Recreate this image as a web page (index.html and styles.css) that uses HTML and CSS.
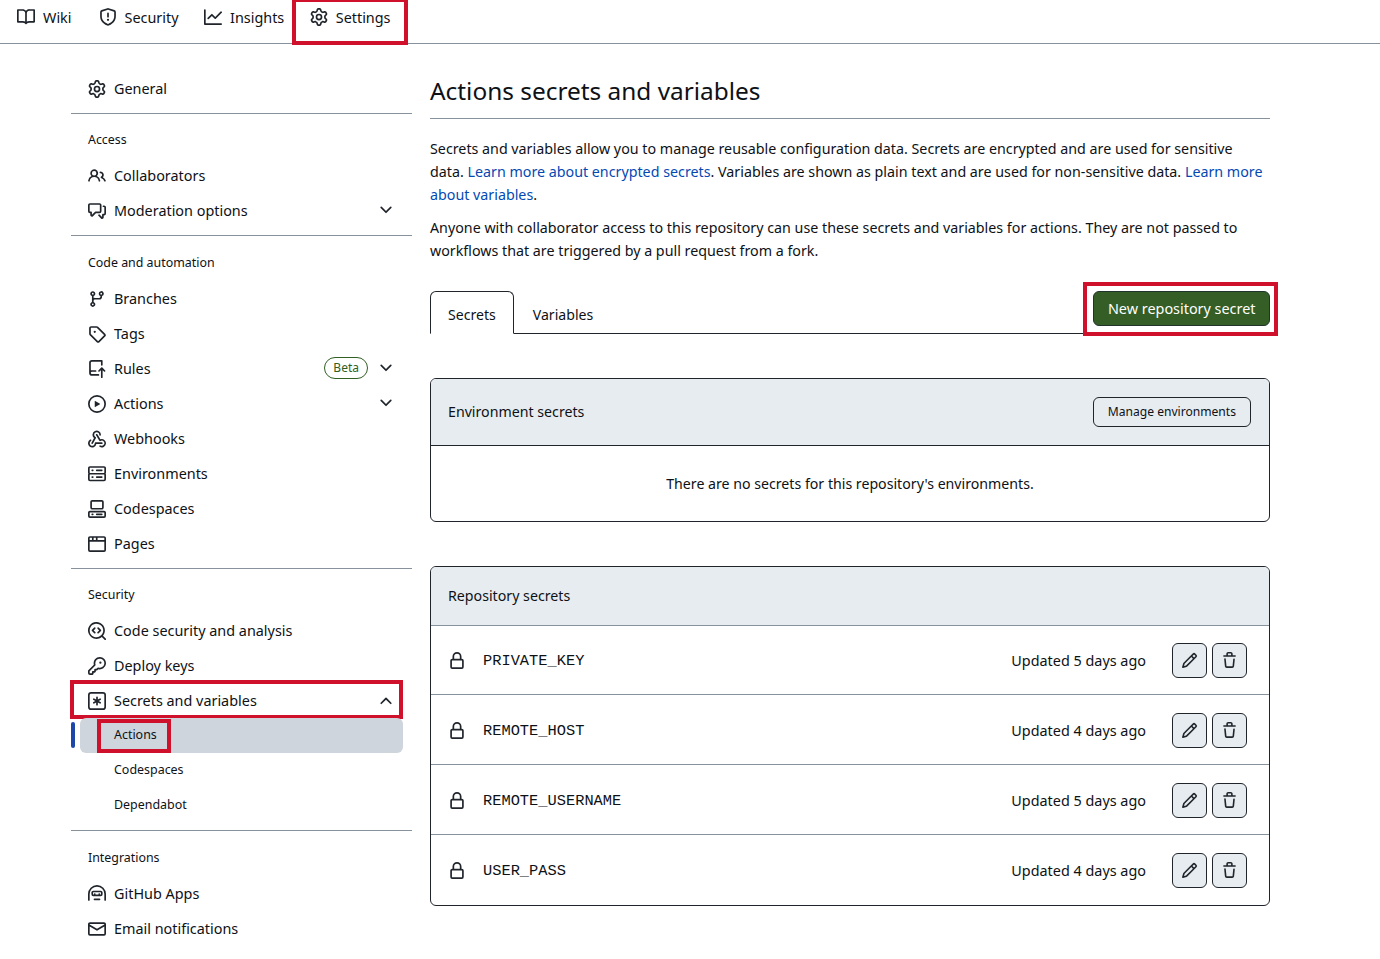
FILE: index.html
```html
<!DOCTYPE html>
<html lang="en">
<head>
<meta charset="utf-8">
<title>Actions secrets and variables</title>
<link rel="stylesheet" href="styles.css">
</head>
<body>
<svg class="sprite" xmlns="http://www.w3.org/2000/svg" aria-hidden="true">
<symbol id="i-book" viewBox="0 0 16 16"><path d="M0 1.75A.75.75 0 0 1 .75 1h4.253c1.227 0 2.317.59 3 1.501A3.743 3.743 0 0 1 11.006 1h4.245a.75.75 0 0 1 .75.75v10.5a.75.75 0 0 1-.75.75h-4.507a2.25 2.25 0 0 0-1.591.659l-.622.621a.75.75 0 0 1-1.06 0l-.622-.621A2.25 2.25 0 0 0 5.258 13H.75a.75.75 0 0 1-.75-.75Zm7.251 10.324.004-5.073-.002-2.253A2.25 2.25 0 0 0 5.003 2.5H1.5v9h3.757a3.75 3.75 0 0 1 1.994.574ZM8.755 4.75l-.004 7.322a3.752 3.752 0 0 1 1.992-.572H14.5v-9h-3.495a2.25 2.25 0 0 0-2.25 2.25Z"/></symbol>
<symbol id="i-shield" viewBox="0 0 16 16"><path d="M7.467.133a1.748 1.748 0 0 1 1.066 0l5.25 1.68A1.75 1.75 0 0 1 15 3.48V7c0 1.566-.32 3.182-1.303 4.682-.983 1.498-2.585 2.813-5.032 3.855a1.697 1.697 0 0 1-1.33 0c-2.447-1.042-4.049-2.357-5.032-3.855C1.32 10.182 1 8.566 1 7V3.48a1.75 1.75 0 0 1 1.217-1.667Zm.61 1.429a.25.25 0 0 0-.153 0l-5.25 1.68a.25.25 0 0 0-.174.238V7c0 1.358.275 2.666 1.057 3.86.784 1.194 2.121 2.34 4.366 3.297a.196.196 0 0 0 .154 0c2.245-.956 3.582-2.104 4.366-3.298C13.225 9.666 13.5 8.36 13.5 7V3.48a.251.251 0 0 0-.174-.237l-5.25-1.68ZM8.75 4.75v3a.75.75 0 0 1-1.5 0v-3a.75.75 0 0 1 1.5 0ZM9 10.5a1 1 0 1 1-2 0 1 1 0 0 1 2 0Z"/></symbol>
<symbol id="i-graph" viewBox="0 0 16 16"><path d="M1.5 1.75V13.5h13.75a.75.75 0 0 1 0 1.5H.75a.75.75 0 0 1-.75-.75V1.75a.75.75 0 0 1 1.5 0Zm14.28 2.53-5.25 5.25a.75.75 0 0 1-1.06 0L7 7.06 4.28 9.78a.751.751 0 0 1-1.042-.018.751.751 0 0 1-.018-1.042l3.25-3.25a.75.75 0 0 1 1.06 0L10 7.94l4.72-4.72a.751.751 0 0 1 1.042.018.751.751 0 0 1 .018 1.042Z"/></symbol>
<symbol id="i-gear" viewBox="0 0 16 16"><path d="M8 0a8.2 8.2 0 0 1 .701.031C9.444.095 9.99.645 10.16 1.29l.288 1.107c.018.066.079.158.212.224.231.114.454.243.668.386.123.082.233.09.299.071l1.103-.303c.644-.176 1.392.021 1.82.63.27.385.506.792.704 1.218.315.675.111 1.422-.364 1.891l-.814.806c-.049.048-.098.147-.088.294.016.257.016.515 0 .772-.01.147.038.246.088.294l.814.806c.475.469.679 1.216.364 1.891a7.977 7.977 0 0 1-.704 1.217c-.428.61-1.176.807-1.82.63l-1.102-.302c-.067-.019-.177-.011-.3.071a5.909 5.909 0 0 1-.668.386c-.133.066-.194.158-.211.224l-.29 1.106c-.168.646-.715 1.196-1.458 1.26a8.006 8.006 0 0 1-1.402 0c-.743-.064-1.289-.614-1.458-1.26l-.289-1.106c-.018-.066-.079-.158-.212-.224a5.738 5.738 0 0 1-.668-.386c-.123-.082-.233-.09-.299-.071l-1.103.303c-.644.176-1.392-.021-1.82-.63a8.12 8.12 0 0 1-.704-1.218c-.315-.675-.111-1.422.363-1.891l.815-.806c.05-.048.098-.147.088-.294a6.214 6.214 0 0 1 0-.772c.01-.147-.038-.246-.088-.294l-.815-.806C.635 6.045.431 5.298.746 4.623a7.92 7.92 0 0 1 .704-1.217c.428-.61 1.176-.807 1.82-.63l1.102.302c.067.019.177.011.3-.071.214-.143.437-.272.668-.386.133-.066.194-.158.211-.224l.29-1.106C6.009.645 6.556.095 7.299.03 7.53.01 7.764 0 8 0Zm-.571 1.525c-.036.003-.108.036-.137.146l-.289 1.105c-.147.561-.549.967-.998 1.189-.173.086-.34.183-.5.29-.417.278-.97.423-1.529.27l-1.103-.303c-.109-.03-.175.016-.195.045-.22.312-.412.644-.573.99-.014.031-.021.11.059.19l.815.806c.411.406.562.957.53 1.456a4.709 4.709 0 0 0 0 .582c.032.499-.119 1.05-.53 1.456l-.815.806c-.081.08-.073.159-.059.19.162.346.353.677.573.989.02.03.085.076.195.046l1.102-.303c.56-.153 1.113-.008 1.53.27.161.107.328.204.501.29.447.222.85.629.997 1.189l.289 1.105c.029.109.101.143.137.146a6.6 6.6 0 0 0 1.142 0c.036-.003.108-.036.137-.146l.289-1.105c.147-.561.549-.967.998-1.189.173-.086.34-.183.5-.29.417-.278.97-.423 1.529-.27l1.103.303c.109.029.175-.016.195-.045.22-.313.411-.644.573-.99.014-.031.021-.11-.059-.19l-.815-.806c-.411-.406-.562-.957-.53-1.456a4.709 4.709 0 0 0 0-.582c-.032-.499.119-1.05.53-1.456l.815-.806c.081-.08.073-.159.059-.19a6.464 6.464 0 0 0-.573-.989c-.02-.03-.085-.076-.195-.046l-1.102.303c-.56.153-1.113.008-1.53-.27a4.44 4.44 0 0 0-.501-.29c-.447-.222-.85-.629-.997-1.189l-.289-1.105c-.029-.11-.101-.143-.137-.146a6.6 6.6 0 0 0-1.142 0ZM11 8a3 3 0 1 1-6 0 3 3 0 0 1 6 0ZM9.5 8a1.5 1.5 0 1 0-3.001.001A1.5 1.5 0 0 0 9.5 8Z"/></symbol>
<symbol id="i-people" viewBox="0 0 16 16"><path d="M2 5.5a3.5 3.5 0 1 1 5.898 2.549 5.508 5.508 0 0 1 3.034 4.084.75.75 0 1 1-1.482.235 4 4 0 0 0-7.9 0 .75.75 0 0 1-1.482-.236A5.507 5.507 0 0 1 3.102 8.05 3.493 3.493 0 0 1 2 5.5ZM11 4a3.001 3.001 0 0 1 2.22 5.018 5.01 5.01 0 0 1 2.56 3.012.749.749 0 0 1-.885.954.752.752 0 0 1-.549-.514 3.507 3.507 0 0 0-2.522-2.372.75.75 0 0 1-.574-.73v-.352a.75.75 0 0 1 .416-.672A1.5 1.5 0 0 0 11 5.5.75.75 0 0 1 11 4Zm-5.5-.5a2 2 0 1 0-.001 3.999A2 2 0 0 0 5.5 3.5Z"/></symbol>
<symbol id="i-discussion" viewBox="0 0 16 16"><path d="M1.75 1h8.5c.966 0 1.75.784 1.75 1.75v5.5A1.75 1.75 0 0 1 10.25 10H7.061l-2.574 2.573A1.458 1.458 0 0 1 2 11.543V10h-.25A1.75 1.75 0 0 1 0 8.25v-5.5C0 1.784.784 1 1.75 1ZM1.5 2.75v5.5c0 .138.112.25.25.25h1a.75.75 0 0 1 .75.75v2.19l2.72-2.72a.749.749 0 0 1 .53-.22h3.5a.25.25 0 0 0 .25-.25v-5.5a.25.25 0 0 0-.25-.25h-8.5a.25.25 0 0 0-.25.25Zm13 2a.25.25 0 0 0-.25-.25h-.5a.75.75 0 0 1 0-1.5h.5c.966 0 1.75.784 1.75 1.75v5.5A1.75 1.75 0 0 1 14.25 12H14v1.543a1.458 1.458 0 0 1-2.487 1.03L9.22 12.28a.749.749 0 0 1 .326-1.275.749.749 0 0 1 .734.215l2.22 2.22v-2.19a.75.75 0 0 1 .75-.75h1a.25.25 0 0 0 .25-.25Z"/></symbol>
<symbol id="i-branch" viewBox="0 0 16 16"><path d="M9.5 3.25a2.25 2.25 0 1 1 3 2.122V6A2.5 2.5 0 0 1 10 8.5H6a1 1 0 0 0-1 1v1.128a2.251 2.251 0 1 1-1.5 0V5.372a2.25 2.25 0 1 1 1.5 0v1.836A2.493 2.493 0 0 1 6 7h4a1 1 0 0 0 1-1v-.628A2.25 2.25 0 0 1 9.5 3.25Zm-6 0a.75.75 0 1 0 1.5 0 .75.75 0 0 0-1.5 0Zm8.25-.75a.75.75 0 1 0 0 1.5.75.75 0 0 0 0-1.5ZM4.25 12a.75.75 0 1 0 0 1.5.75.75 0 0 0 0-1.5Z"/></symbol>
<symbol id="i-tag" viewBox="0 0 16 16"><path d="M1 7.775V2.75C1 1.784 1.784 1 2.75 1h5.025c.464 0 .91.184 1.238.513l6.25 6.25a1.75 1.75 0 0 1 0 2.474l-5.026 5.026a1.75 1.75 0 0 1-2.474 0l-6.25-6.25A1.752 1.752 0 0 1 1 7.775Zm1.5 0c0 .066.026.13.073.177l6.25 6.25a.25.25 0 0 0 .354 0l5.025-5.025a.25.25 0 0 0 0-.354l-6.25-6.25a.25.25 0 0 0-.177-.073H2.75a.25.25 0 0 0-.25.25ZM6 5a1 1 0 1 1 0 2 1 1 0 0 1 0-2Z"/></symbol>
<symbol id="i-rules" viewBox="0 0 16 16"><path d="M1 2.5A2.5 2.5 0 0 1 3.5 0h8.75a.75.75 0 0 1 .75.75v3.5a.75.75 0 0 1-1.5 0V1.5h-8a1 1 0 0 0-1 1v6.708A2.493 2.493 0 0 1 3.5 9h3.25a.75.75 0 0 1 0 1.5H3.5a1 1 0 0 0 0 2h5.75a.75.75 0 0 1 0 1.5H3.5A2.5 2.5 0 0 1 1 11.5Zm13.23 7.79h-.001l-1.224-1.224v6.184a.75.75 0 0 1-1.5 0V9.066L10.28 10.29a.75.75 0 0 1-1.06-1.061l2.505-2.504a.75.75 0 0 1 1.06 0L15.29 9.23a.751.751 0 0 1-.018 1.042.751.751 0 0 1-1.042.018Z"/></symbol>
<symbol id="i-play" viewBox="0 0 16 16"><path d="M8 0a8 8 0 1 1 0 16A8 8 0 0 1 8 0ZM1.5 8a6.5 6.5 0 1 0 13 0 6.5 6.5 0 0 0-13 0Zm4.879-2.773 4.264 2.559a.25.25 0 0 1 0 .428l-4.264 2.559A.25.25 0 0 1 6 10.559V5.442a.25.25 0 0 1 .379-.215Z"/></symbol>
<symbol id="i-webhook" viewBox="0 0 16 16"><path d="M5.5 4.25a2.25 2.25 0 0 1 4.5 0 .75.75 0 0 0 1.5 0 3.75 3.75 0 1 0-6.14 2.889l-2.272 4.258a.75.75 0 0 0 1.324.706L7 7.25a.75.75 0 0 0-.309-1.015A2.25 2.25 0 0 1 5.5 4.25Z"/><path d="M7.364 3.607a.75.75 0 0 1 1.03.257l2.608 4.349a3.75 3.75 0 1 1-.628 6.785.75.75 0 0 1 .752-1.299 2.25 2.25 0 1 0-.033-3.88.75.75 0 0 1-1.03-.256L7.107 4.636a.75.75 0 0 1 .257-1.03Z"/><path d="M2.9 8.776A.75.75 0 0 1 2.625 9.8 2.25 2.25 0 1 0 6 11.75a.75.75 0 0 1 .75-.751h5.5a.75.75 0 0 1 0 1.5H7.425a3.751 3.751 0 1 1-5.55-3.998.75.75 0 0 1 1.024.274Z"/></symbol>
<symbol id="i-server" viewBox="0 0 16 16"><path d="M1.75 1h12.5c.966 0 1.75.784 1.75 1.75v4c0 .372-.116.717-.314 1 .198.283.314.628.314 1v4a1.75 1.75 0 0 1-1.75 1.75H1.75A1.75 1.75 0 0 1 0 12.75v-4c0-.358.109-.707.314-1a1.739 1.739 0 0 1-.314-1v-4C0 1.784.784 1 1.75 1ZM1.5 2.75v4c0 .138.112.25.25.25h12.5a.25.25 0 0 0 .25-.25v-4a.25.25 0 0 0-.25-.25H1.75a.25.25 0 0 0-.25.25Zm.25 5.75a.25.25 0 0 0-.25.25v4c0 .138.112.25.25.25h12.5a.25.25 0 0 0 .25-.25v-4a.25.25 0 0 0-.25-.25ZM7 4.75A.75.75 0 0 1 7.75 4h4.5a.75.75 0 0 1 0 1.5h-4.5A.75.75 0 0 1 7 4.75ZM7.75 10h4.5a.75.75 0 0 1 0 1.5h-4.5a.75.75 0 0 1 0-1.5ZM3 4.75A.75.75 0 0 1 3.75 4h.5a.75.75 0 0 1 0 1.5h-.5A.75.75 0 0 1 3 4.75ZM3.75 10h.5a.75.75 0 0 1 0 1.5h-.5a.75.75 0 0 1 0-1.5Z"/></symbol>
<symbol id="i-codespaces" viewBox="0 0 16 16"><path d="M0 11.25c0-.966.784-1.75 1.75-1.75h12.5c.966 0 1.75.784 1.75 1.75v3A1.75 1.75 0 0 1 14.25 16H1.75A1.75 1.75 0 0 1 0 14.25Zm2-9.5C2 .784 2.784 0 3.75 0h8.5C13.216 0 14 .784 14 1.75v5a1.75 1.75 0 0 1-1.75 1.75h-8.5A1.75 1.75 0 0 1 2 6.75Zm1.75-.25a.25.25 0 0 0-.25.25v5c0 .138.112.25.25.25h8.5a.25.25 0 0 0 .25-.25v-5a.25.25 0 0 0-.25-.25Zm-2 9.5a.25.25 0 0 0-.25.25v3c0 .138.112.25.25.25h12.5a.25.25 0 0 0 .25-.25v-3a.25.25 0 0 0-.25-.25Z"/><path d="M7 12.75a.75.75 0 0 1 .75-.75h4.5a.75.75 0 0 1 0 1.5h-4.5a.75.75 0 0 1-.75-.75Zm-4 0a.75.75 0 0 1 .75-.75h.5a.75.75 0 0 1 0 1.5h-.5a.75.75 0 0 1-.75-.75Z"/></symbol>
<symbol id="i-browser" viewBox="0 0 16 16"><path d="M0 2.75C0 1.784.784 1 1.75 1h12.5c.966 0 1.75.784 1.75 1.75v10.5A1.75 1.75 0 0 1 14.25 15H1.75A1.75 1.75 0 0 1 0 13.25ZM14.5 6h-13v7.25c0 .138.112.25.25.25h12.5a.25.25 0 0 0 .25-.25Zm-6-3.5v2h6v-1.75a.25.25 0 0 0-.25-.25ZM5 2.5v2h2v-2Zm-3.25 0a.25.25 0 0 0-.25.25V4.5h2v-2Z"/></symbol>
<symbol id="i-codescan" viewBox="0 0 16 16"><path d="M8.47 4.97a.75.75 0 0 0 0 1.06L9.94 7.5 8.47 8.97a.75.75 0 1 0 1.06 1.06l2-2a.75.75 0 0 0 0-1.06l-2-2a.75.75 0 0 0-1.06 0ZM6.53 6.03a.75.75 0 0 0-1.06-1.06l-2 2a.75.75 0 0 0 0 1.06l2 2a.75.75 0 1 0 1.06-1.06L5.06 7.5l1.47-1.47Z"/><path d="M12.246 13.307a7.501 7.501 0 1 1 1.06-1.06l2.474 2.473a.749.749 0 0 1-.326 1.275.749.749 0 0 1-.734-.215ZM1.5 7.5a6.002 6.002 0 0 0 3.608 5.504 6.002 6.002 0 0 0 6.486-1.117.748.748 0 0 1 .292-.293A6 6 0 1 0 1.5 7.5Z"/></symbol>
<symbol id="i-key" viewBox="0 0 16 16"><path d="M10.5 0a5.499 5.499 0 1 1-1.288 10.848l-.932.932a.749.749 0 0 1-.53.22H7v.75a.749.749 0 0 1-.22.53l-.5.5a.749.749 0 0 1-.53.22H5v.75a.749.749 0 0 1-.22.53l-.5.5a.749.749 0 0 1-.53.22h-2A1.75 1.75 0 0 1 0 14.25v-2c0-.199.079-.389.22-.53l4.932-4.932A5.5 5.5 0 0 1 10.5 0Zm-4 5.5c-.001.431.069.86.205 1.269a.75.75 0 0 1-.181.768L1.5 12.56v1.69c0 .138.112.25.25.25h1.69l.06-.06v-1.19a.75.75 0 0 1 .75-.75h1.19l.06-.06v-1.19a.75.75 0 0 1 .75-.75h1.19l1.023-1.025a.75.75 0 0 1 .768-.18A4 4 0 1 0 6.5 5.5ZM11 6a1 1 0 1 1 0-2 1 1 0 0 1 0 2Z"/></symbol>
<symbol id="i-asterisk" viewBox="0 0 16 16"><path d="M0 2.75A2.75 2.75 0 0 1 2.75 0h10.5A2.75 2.75 0 0 1 16 2.75v10.5A2.75 2.75 0 0 1 13.25 16H2.75A2.75 2.75 0 0 1 0 13.25ZM2.75 1.5c-.69 0-1.25.56-1.25 1.25v10.5c0 .69.56 1.25 1.25 1.25h10.5c.69 0 1.25-.56 1.25-1.25V2.75c0-.69-.56-1.25-1.25-1.25Z"/><path d="M8 4a.75.75 0 0 1 .75.75V6.7l1.69-.975a.75.75 0 0 1 .75 1.3L9.5 8l1.69.976a.75.75 0 0 1-.75 1.298L8.75 9.3v1.951a.75.75 0 0 1-1.5 0V9.299l-1.69.976a.75.75 0 0 1-.75-1.3L6.5 8l-1.69-.975a.75.75 0 0 1 .75-1.3l1.69.976V4.75A.75.75 0 0 1 8 4Z"/></symbol>
<symbol id="i-hubot" viewBox="0 0 16 16"><path d="M0 8a8 8 0 0 1 16 0v5.25a.75.75 0 0 1-1.5 0V8a6.5 6.5 0 1 0-13 0v5.25a.75.75 0 0 1-1.5 0Zm3-1.25C3 5.784 3.784 5 4.75 5h6.5c.966 0 1.75.784 1.75 1.75v1.5A1.75 1.75 0 0 1 11.25 10h-6.5A1.75 1.75 0 0 1 3 8.25Zm1.75-.25a.25.25 0 0 0-.25.25v1.5c0 .138.112.25.25.25h6.5a.25.25 0 0 0 .25-.25v-1.5a.25.25 0 0 0-.25-.25ZM6 7.25a.75.75 0 0 1 0 1.5.75.75 0 0 1 0-1.5Zm4 0a.75.75 0 0 1 0 1.5.75.75 0 0 1 0-1.5Zm-5 5.5a.75.75 0 0 1 .75-.75h4.5a.75.75 0 0 1 0 1.5h-4.5a.75.75 0 0 1-.75-.75Z"/></symbol>
<symbol id="i-mail" viewBox="0 0 16 16"><path d="M1.75 2h12.5c.966 0 1.75.784 1.75 1.75v8.5A1.75 1.75 0 0 1 14.25 14H1.75A1.75 1.75 0 0 1 0 12.25v-8.5C0 2.784.784 2 1.75 2ZM1.5 12.251c0 .138.112.25.25.25h12.5a.25.25 0 0 0 .25-.25V5.809L8.38 9.397a.75.75 0 0 1-.76 0L1.5 5.809v6.442Zm13-8.181v-.32a.25.25 0 0 0-.25-.25H1.75a.25.25 0 0 0-.25.25v.32L8 7.88Z"/></symbol>
<symbol id="i-down" viewBox="0 0 16 16"><path d="M12.78 5.22a.749.749 0 0 1 0 1.06l-4.25 4.25a.749.749 0 0 1-1.06 0L3.22 6.28a.749.749 0 1 1 1.06-1.06L8 8.939l3.72-3.719a.749.749 0 0 1 1.06 0Z"/></symbol>
<symbol id="i-up" viewBox="0 0 16 16"><path d="M3.22 10.53a.749.749 0 0 1 0-1.06l4.25-4.25a.749.749 0 0 1 1.06 0l4.25 4.25a.749.749 0 1 1-1.06 1.06L8 6.811 4.28 10.53a.749.749 0 0 1-1.06 0Z"/></symbol>
<symbol id="i-lock" viewBox="0 0 16 16"><path d="M4 4a4 4 0 0 1 8 0v2h.25c.966 0 1.75.784 1.75 1.75v5.5A1.75 1.75 0 0 1 12.25 15h-8.5A1.75 1.75 0 0 1 2 13.25v-5.5C2 6.784 2.784 6 3.75 6H4Zm8.25 3.5h-8.5a.25.25 0 0 0-.25.25v5.5c0 .138.112.25.25.25h8.5a.25.25 0 0 0 .25-.25v-5.5a.25.25 0 0 0-.25-.25ZM10.5 6V4a2.5 2.5 0 1 0-5 0v2Z"/></symbol>
<symbol id="i-pencil" viewBox="0 0 16 16"><path d="M11.013 1.427a1.75 1.75 0 0 1 2.474 0l1.086 1.086a1.75 1.75 0 0 1 0 2.474l-8.61 8.61c-.21.21-.47.364-.756.445l-3.251.93a.75.75 0 0 1-.927-.928l.929-3.25c.081-.286.235-.547.445-.758l8.61-8.61Zm.176 4.823L9.75 4.81l-6.286 6.287a.253.253 0 0 0-.064.108l-.558 1.953 1.953-.558a.253.253 0 0 0 .108-.064Zm1.238-3.763a.25.25 0 0 0-.354 0L10.811 3.75l1.439 1.44 1.263-1.263a.25.25 0 0 0 0-.354Z"/></symbol>
<symbol id="i-trash" viewBox="0 0 16 16"><path d="M11 1.75V3h2.25a.75.75 0 0 1 0 1.5H2.75a.75.75 0 0 1 0-1.5H5V1.75C5 .784 5.784 0 6.75 0h2.5C10.216 0 11 .784 11 1.75ZM4.496 6.675l.66 6.6a.25.25 0 0 0 .249.225h5.19a.25.25 0 0 0 .249-.225l.66-6.6a.75.75 0 0 1 1.492.149l-.66 6.6A1.748 1.748 0 0 1 10.595 15h-5.19a1.75 1.75 0 0 1-1.741-1.575l-.66-6.6a.75.75 0 1 1 1.492-.15ZM6.5 1.75V3h3V1.75a.25.25 0 0 0-.25-.25h-2.5a.25.25 0 0 0-.25.25Z"/></symbol>
</svg>

<header class="repo-nav">
  <a class="repo-tab repo-tab-wiki"><svg class="icon"><use href="#i-book"/></svg>Wiki</a>
  <a class="repo-tab"><svg class="icon"><use href="#i-shield"/></svg>Security</a>
  <a class="repo-tab"><svg class="icon"><use href="#i-graph"/></svg>Insights</a>
  <a class="repo-tab repo-tab-settings"><svg class="icon"><use href="#i-gear"/></svg>Settings<span class="callout callout-settings"></span></a>
</header>

<div class="layout">
  <nav class="sidebar">
    <div class="nav-group">
      <a class="nav-item"><svg class="icon"><use href="#i-gear"/></svg>General</a>
    </div>
    <div class="nav-group">
      <h2 class="nav-heading heading-access">Access</h2>
      <a class="nav-item"><svg class="icon"><use href="#i-people"/></svg>Collaborators</a>
      <a class="nav-item"><svg class="icon"><use href="#i-discussion"/></svg>Moderation options<svg class="icon chevron"><use href="#i-down"/></svg></a>
    </div>
    <div class="nav-group">
      <h2 class="nav-heading">Code and automation</h2>
      <a class="nav-item"><svg class="icon"><use href="#i-branch"/></svg>Branches</a>
      <a class="nav-item"><svg class="icon"><use href="#i-tag"/></svg>Tags</a>
      <a class="nav-item"><svg class="icon"><use href="#i-rules"/></svg>Rules<span class="beta">Beta</span><svg class="icon chevron chevron-after-beta"><use href="#i-down"/></svg></a>
      <a class="nav-item"><svg class="icon"><use href="#i-play"/></svg>Actions<svg class="icon chevron"><use href="#i-down"/></svg></a>
      <a class="nav-item"><svg class="icon"><use href="#i-webhook"/></svg>Webhooks</a>
      <a class="nav-item"><svg class="icon"><use href="#i-server"/></svg>Environments</a>
      <a class="nav-item"><svg class="icon"><use href="#i-codespaces"/></svg>Codespaces</a>
      <a class="nav-item"><svg class="icon"><use href="#i-browser"/></svg>Pages</a>
    </div>
    <div class="nav-group">
      <h2 class="nav-heading heading-security">Security</h2>
      <a class="nav-item"><svg class="icon"><use href="#i-codescan"/></svg>Code security and analysis</a>
      <a class="nav-item"><svg class="icon"><use href="#i-key"/></svg>Deploy keys</a>
      <a class="nav-item nav-item-open"><svg class="icon"><use href="#i-asterisk"/></svg>Secrets and variables<svg class="icon chevron chevron-up"><use href="#i-up"/></svg><span class="callout callout-secrets"></span></a>
      <a class="nav-sub nav-sub-active"><span class="nav-sub-label">Actions<span class="callout callout-actions"></span></span></a>
      <a class="nav-sub"><span class="nav-sub-label">Codespaces</span></a>
      <a class="nav-sub"><span class="nav-sub-label">Dependabot</span></a>
    </div>
    <div class="nav-group nav-group-last">
      <h2 class="nav-heading">Integrations</h2>
      <a class="nav-item"><svg class="icon"><use href="#i-hubot"/></svg>GitHub Apps</a>
      <a class="nav-item"><svg class="icon"><use href="#i-mail"/></svg>Email notifications</a>
    </div>
  </nav>

  <main class="content">
    <h1 class="page-title">Actions secrets and variables</h1>
    <p class="intro">Secrets and variables allow you to manage reusable configuration data. Secrets are encrypted and are used for sensitive data. <a class="link">Learn more about encrypted secrets</a>. Variables are shown as plain text and are used for non-sensitive data. <a class="link">Learn more about variables</a>.</p>
    <p class="intro intro-second">Anyone with collaborator access to this repository can use these secrets and variables for actions. They are not passed to workflows that are triggered by a pull request from a fork.</p>

    <div class="tabs">
      <a class="tab tab-selected">Secrets</a>
      <a class="tab">Variables</a>
      <a class="btn-primary">New repository secret<span class="callout callout-new"></span></a>
    </div>

    <section class="box box-env">
      <div class="box-head box-head-env">
        <span class="box-title">Environment secrets</span>
        <a class="btn-small">Manage environments</a>
      </div>
      <div class="box-empty">There are no secrets for this repository's environments.</div>
    </section>

    <section class="box box-repo">
      <div class="box-head box-head-repo"><span class="box-title">Repository secrets</span></div>
      <div class="secret-row secret-row-first">
        <svg class="icon lock"><use href="#i-lock"/></svg>
        <code class="secret-name">PRIVATE_KEY</code>
        <span class="secret-time">Updated 5 days ago</span>
        <button class="icon-btn"><svg class="icon-sm"><use href="#i-pencil"/></svg></button>
        <button class="icon-btn"><svg class="icon-sm"><use href="#i-trash"/></svg></button>
      </div>
      <div class="secret-row">
        <svg class="icon lock"><use href="#i-lock"/></svg>
        <code class="secret-name">REMOTE_HOST</code>
        <span class="secret-time">Updated 4 days ago</span>
        <button class="icon-btn"><svg class="icon-sm"><use href="#i-pencil"/></svg></button>
        <button class="icon-btn"><svg class="icon-sm"><use href="#i-trash"/></svg></button>
      </div>
      <div class="secret-row">
        <svg class="icon lock"><use href="#i-lock"/></svg>
        <code class="secret-name">REMOTE_USERNAME</code>
        <span class="secret-time">Updated 5 days ago</span>
        <button class="icon-btn"><svg class="icon-sm"><use href="#i-pencil"/></svg></button>
        <button class="icon-btn"><svg class="icon-sm"><use href="#i-trash"/></svg></button>
      </div>
      <div class="secret-row secret-row-last">
        <svg class="icon lock"><use href="#i-lock"/></svg>
        <code class="secret-name">USER_PASS</code>
        <span class="secret-time">Updated 4 days ago</span>
        <button class="icon-btn"><svg class="icon-sm"><use href="#i-pencil"/></svg></button>
        <button class="icon-btn"><svg class="icon-sm"><use href="#i-trash"/></svg></button>
      </div>
    </section>
  </main>
</div>
</body>
</html>
```
FILE: styles.css
```css
* { box-sizing: border-box; }
html, body { margin: 0; padding: 0; background: #fff; }
body {
  font-family: "Noto Sans", "Open Sans", sans-serif;
  font-size: 14.4px;
  color: #0e1116;
  height: 959px;
  overflow: hidden;
}
.sprite { display: none; }
.icon { width: 18px; height: 18px; flex: none; fill: #20252c; }
.icon-sm { width: 17px; height: 17px; fill: #20252c; display: block; }

.callout { position: absolute; border: 4px solid #d0112b; pointer-events: none; }
.callout-settings { left: -17.5px; right: -17.5px; top: -9px; bottom: -18px; }
.callout-secrets { left: -1px; right: 9px; top: -3px; bottom: -1px; }
.callout-actions { left: -17px; right: -14px; top: -7px; bottom: -10px; }
.callout-new { left: -11px; right: -9px; top: -10px; bottom: -11px; }

.repo-nav {
  height: 44px;
  border-bottom: 1px solid #88929d;
  display: flex;
  gap: 25.5px;
  padding: 0 0 9px 17px;
  align-items: center;
}
.repo-tab { display: flex; align-items: center; gap: 8px; position: relative; height: 20px; }
.repo-tab-wiki { margin-right: 1.5px; }

.layout {
  display: grid;
  grid-template-columns: 341px 840px;
  column-gap: 18px;
  padding: 27px 0 0 71px;
}

.nav-group { border-bottom: 1px solid #88929d; padding-bottom: 7px; }
.nav-group-last { border-bottom: 0; }
.nav-heading { margin: 0; height: 45px; padding: 19px 0 0 17px; font-size: 12.4px; line-height: 16px; font-weight: 400; }
.heading-access { height: 44px; padding-top: 18px; }
.heading-security { height: 44px; padding-top: 18px; }
.nav-item {
  display: flex;
  align-items: center;
  gap: 8px;
  height: 35px;
  padding: 0 17px;
  position: relative;
}
.chevron { margin-left: auto; margin-top: -2px; }
.chevron-up { margin-top: 0; }
.chevron-after-beta { margin-left: 1px; }
.beta {
  margin-left: auto;
  margin-top: -2px;
  height: 22px;
  padding: 0 8px;
  border: 1px solid #2f5f22;
  border-radius: 11px;
  color: #2f5f22;
  font-size: 12px;
  line-height: 20px;
}
.nav-sub {
  display: flex;
  align-items: center;
  height: 35px;
  margin-left: 9px;
  margin-right: 9px;
  padding: 0 0 2px 34px;
  font-size: 12.45px;
  position: relative;
  border-radius: 6px;
}
.nav-sub-label { position: relative; line-height: 17px; }
.nav-sub-active { background: #ced5dc; }
.nav-sub-active::before {
  content: "";
  position: absolute;
  left: -9px;
  top: 4px;
  width: 4px;
  height: 26px;
  border-radius: 2px;
  background: #1d47a8;
}

.page-title {
  margin: 0 0 18px;
  height: 48px;
  font-size: 24.4px;
  line-height: 40px;
  font-weight: 400;
  border-bottom: 1px solid #88929d;
}
.intro { margin: 0; font-size: 14.28px; line-height: 23.2px; }
.intro-second { margin-top: 9px; }
.link { color: #0349b4; }

.tabs {
  display: flex;
  margin-top: 29px;
  height: 43px;
  border-bottom: 1px solid #20252c;
  align-items: flex-start;
}
.tab { height: 43px; padding: 0 18px; font-size: 14.1px; line-height: 46px; border: 1px solid transparent; }
.tab-selected {
  padding: 0 17px;
  border-color: #20252c;
  border-bottom: 1px solid #fff;
  border-radius: 6px 6px 0 0;
  background: #fff;
}
.btn-primary {
  position: relative;
  margin-left: auto;
  height: 35px;
  padding: 0 13.5px;
  line-height: 33px;
  background: #345e26;
  border: 1px solid #20352a;
  border-radius: 6px;
  color: #fff;
}
.box { border: 1px solid #20252c; border-radius: 6px; }
.box-env { margin-top: 44px; height: 144px; }
.box-repo { margin-top: 44px; }
.box-head {
  background: #e7ecf0;
  border-radius: 5px 5px 0 0;
  display: flex;
  align-items: center;
  justify-content: space-between;
  padding: 0 18px 0 17px;
}
.box-head-env { height: 67px; border-bottom: 1px solid #20252c; }
.box-title { margin-bottom: 2px; font-size: 14.2px; }
.box-head-repo { height: 59px; border-bottom: 1px solid #88929d; }
.btn-small {
  height: 30px;
  padding: 0 14px;
  font-size: 12.1px;
  line-height: 28px;
  border: 1px solid #20252c;
  border-radius: 6px;
}
.box-empty { text-align: center; padding-top: 26px; font-size: 14.17px; line-height: 24px; }
.secret-row {
  display: flex;
  align-items: center;
  height: 70px;
  padding: 2px 22px 0 17px;
  border-top: 1px solid #88929d;
}
.secret-row-first { height: 68px; padding-top: 1px; border-top: 0; }
.secret-row-last { height: 71px; padding-top: 1px; }
.lock { margin-right: 17px; }
.secret-name { font-family: "Liberation Mono", monospace; font-size: 15.36px; margin-top: 1px; }
.secret-time { margin-left: auto; margin-right: 26px; }
.icon-btn {
  width: 35px;
  height: 35px;
  padding: 0;
  margin-left: 5px;
  background: #e7ecf0;
  border: 1px solid #20252c;
  border-radius: 6px;
  display: flex;
  align-items: center;
  justify-content: center;
}
.secret-time + .icon-btn { margin-left: 0; }
```
